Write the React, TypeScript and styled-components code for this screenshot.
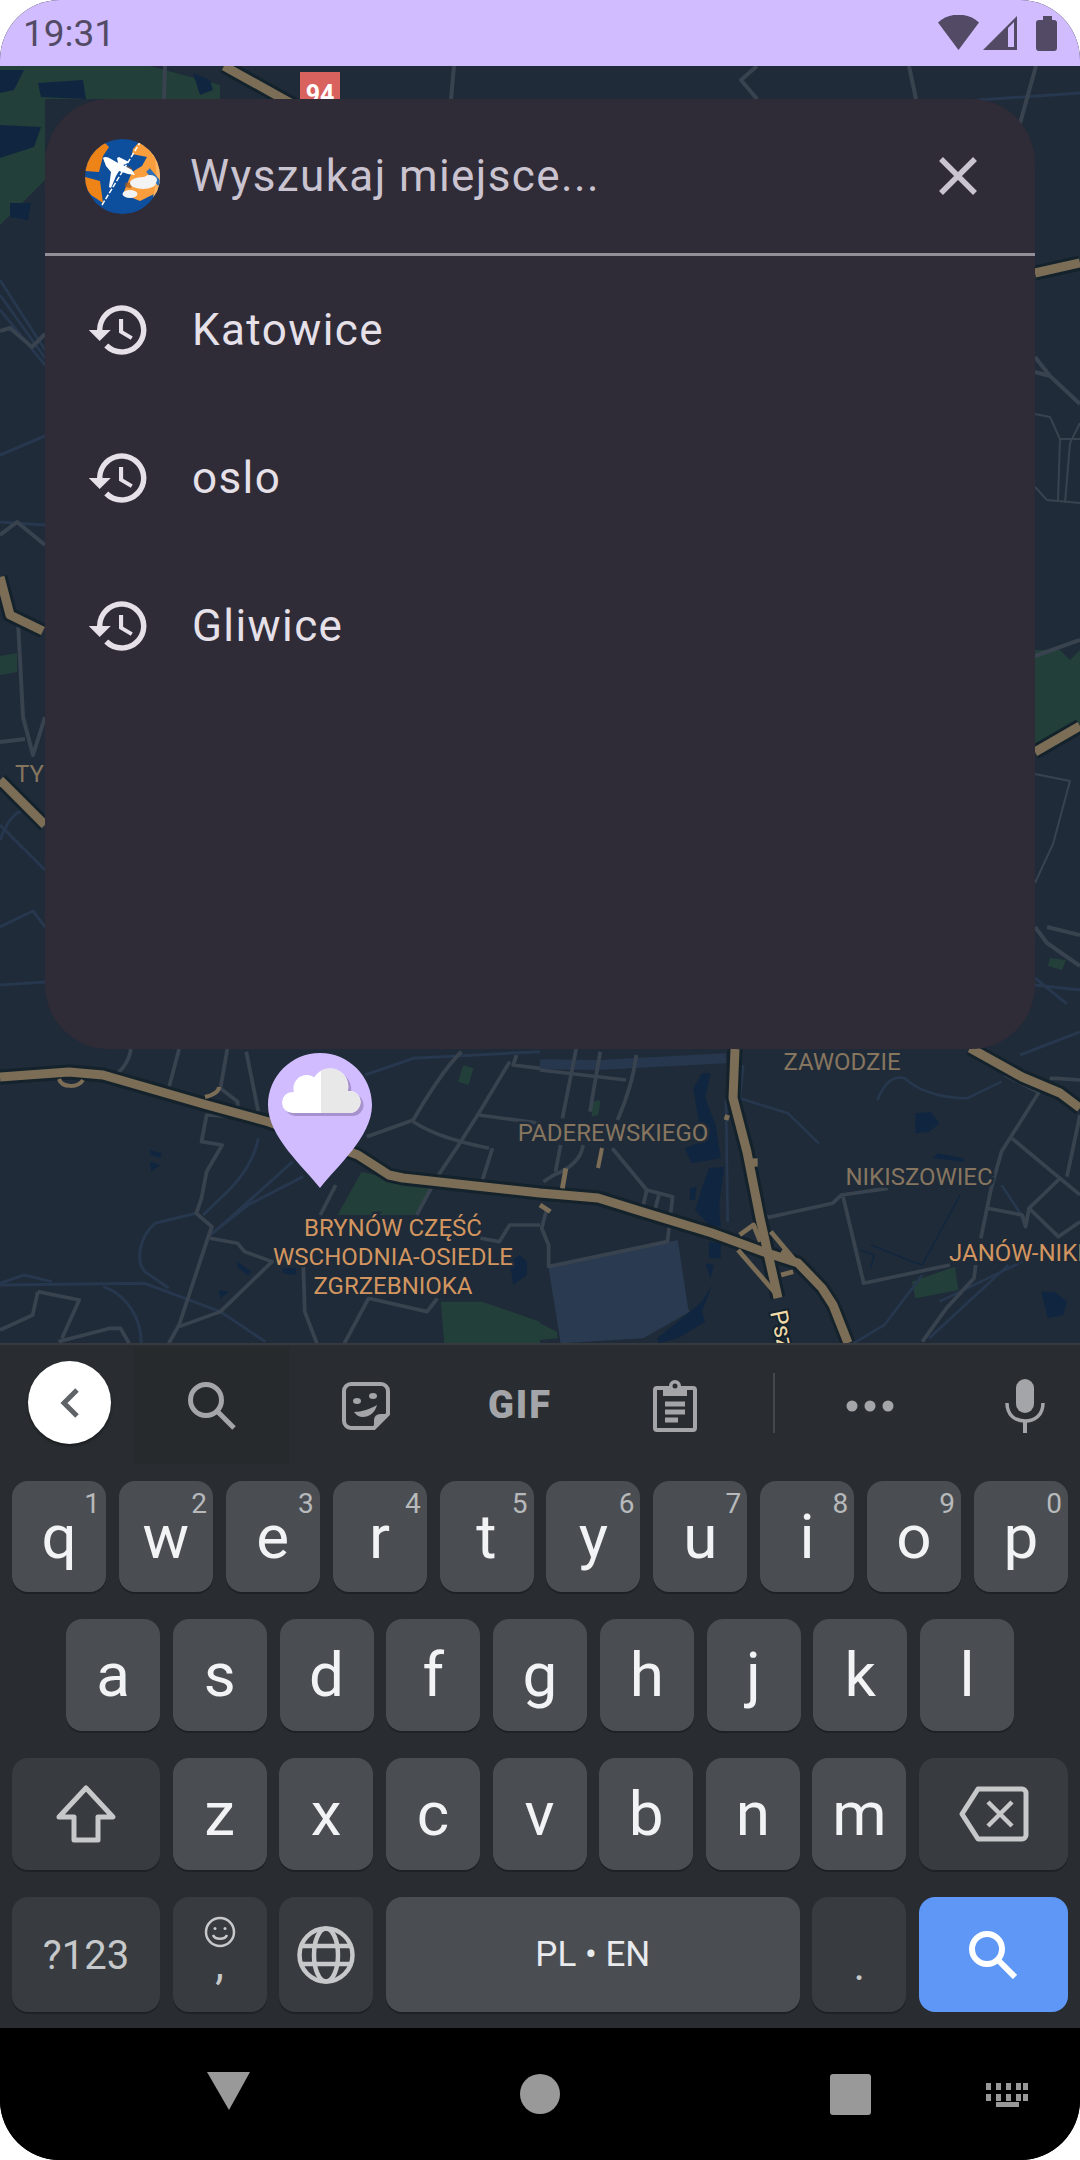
import { createGlobalStyle, styled } from "styled-components";

const GlobalStyle = createGlobalStyle`
  html, body {
    margin: 0;
    padding: 0;
    background: #fff;
    font-family: Roboto, "Noto Sans", sans-serif;
  }
`;

const Screen = styled.div`
  width: 1080px;
  height: 2160px;
  border-radius: 60px;
  overflow: hidden;
  display: flex;
  flex-direction: column;
  background: #000;
`;

const StatusBar = styled.div`
  height: 66px;
  flex: none;
  background: #d0bcff;
  display: flex;
  align-items: center;
  justify-content: space-between;
  padding: 0 22px 0 23px;
  box-sizing: border-box;
`;

const Clock = styled.span`
  font-size: 37px;
  color: #534a66;
`;

const StatusIcons = styled.svg`
  width: 120px;
  height: 36px;
  fill: #534a66;
`;

const MapArea = styled.div`
  position: relative;
  height: 1277px;
  flex: none;
  overflow: hidden;
  background: #1f2b38;
`;

const MapDrawing = styled.svg`
  display: block;
  width: 1080px;
  height: 1277px;
`;

const MapLabel = styled.text<{ $tone?: "bright" | "dim" }>`
  font-family: Roboto, sans-serif;
  font-size: 24px;
  fill: ${(p) => (p.$tone === "bright" ? "#d2955f" : "#86755f")};
  stroke: #1f2b38;
  stroke-width: 5px;
  paint-order: stroke;
`;

const RoadSign = styled.div`
  position: absolute;
  left: 300px;
  top: 6px;
  width: 40px;
  height: 40px;
  background: #d9625f;
  color: #fff;
  font-size: 25px;
  font-weight: 700;
  text-align: center;
  line-height: 46px;
`;

const Pin = styled.svg`
  position: absolute;
  left: 268px;
  top: 987px;
  width: 104px;
  height: 135px;
`;

const SearchPanel = styled.div`
  position: absolute;
  left: 45px;
  top: 33px;
  width: 990px;
  height: 950px;
  border-radius: 64px;
  background: #2f2b37;
  display: flex;
  flex-direction: column;
`;

const SearchRow = styled.div`
  height: 154px;
  flex: none;
  box-sizing: border-box;
  padding: 0 58px 0 40px;
  display: flex;
  align-items: center;
  gap: 30px;
`;

const Placeholder = styled.span`
  flex: 1;
  font-size: 44px;
  letter-spacing: 1.4px;
  color: #cac4d0;
`;

const Divider = styled.div`
  height: 3px;
  flex: none;
  background: #938f99;
`;

const HistoryRow = styled.div`
  height: 148px;
  display: flex;
  align-items: center;
  gap: 40px;
  padding-left: 41px;
  font-size: 44px;
  letter-spacing: 1.4px;
  color: #e6e0e9;
`;

const HistoryIcon = styled.svg`
  width: 66px;
  height: 66px;
  fill: #e6e0e9;
  flex: none;
`;

const Keyboard = styled.div`
  height: 685px;
  flex: none;
  box-sizing: border-box;
  border-top: 2px solid #36393d;
  background: #292d31;
  display: flex;
  flex-direction: column;
`;

const Toolbar = styled.div`
  height: 136px;
  flex: none;
  display: flex;
  align-items: flex-start;
  padding-left: 28px;
`;

const BackButton = styled.div`
  width: 83px;
  height: 83px;
  flex: none;
  margin: 16px 23px 0 0;
  border-radius: 50%;
  background: #fff;
  box-shadow: 0 2px 3px rgba(0, 0, 0, 0.4);
  display: flex;
  align-items: center;
  justify-content: center;
`;

const ToolSlot = styled.div<{ $width: number; $active?: boolean }>`
  width: ${(p) => p.$width}px;
  height: 117px;
  margin-top: 2px;
  flex: none;
  display: flex;
  align-items: center;
  justify-content: center;
  background: ${(p) => (p.$active ? "#272a2d" : "transparent")};
`;

const ToolSeparator = styled.div`
  width: 2px;
  height: 60px;
  margin: 28px 20px 0 20px;
  flex: none;
  background: #44484c;
`;

const ToolIcon = styled.svg`
  flex: none;
`;

const GifMark = styled.span`
  font-size: 38px;
  font-weight: 900;
  letter-spacing: 2px;
  margin-bottom: 2px;
  color: #a3a5a8;
`;

const KeyRows = styled.div`
  display: flex;
  flex-direction: column;
  gap: 27px;
`;

const KeyRow = styled.div<{ $inset?: number; $height: number }>`
  height: ${(p) => p.$height}px;
  display: flex;
  justify-content: space-between;
  padding: 0 ${(p) => 12 + (p.$inset ?? 0)}px;
`;

const Key = styled.div<{ $width?: number; $tone?: "letter" | "func" | "accent" }>`
  position: relative;
  width: ${(p) => p.$width ?? 94}px;
  height: 100%;
  flex: none;
  border-radius: 16px;
  background: ${(p) =>
    p.$tone === "func" ? "#383c40" : p.$tone === "accent" ? "#5e97f6" : "#4a4e52"};
  box-shadow: ${(p) => (p.$tone === "accent" ? "none" : "0 2px 0 #1f2225")};
  display: flex;
  flex-direction: column;
  align-items: center;
  justify-content: center;
  color: #f1f3f4;
  font-size: 62px;
  line-height: 1;
`;

const Hint = styled.span`
  position: absolute;
  top: 9px;
  right: 6px;
  font-size: 28px;
  color: #b7b9bb;
`;

const SpaceLabel = styled.span`
  font-size: 35px;
  color: #e8eaed;
`;

const SymbolsLabel = styled.span`
  font-size: 40px;
  margin-top: 3px;
  color: #c6c8ca;
`;

const PunctLabel = styled.span<{ $top: number; $bottom?: number }>`
  font-size: 44px;
  color: #c6c8ca;
  margin-top: ${(p) => p.$top}px;
  margin-bottom: ${(p) => p.$bottom ?? 0}px;
`;

const NavBar = styled.div`
  flex: 1;
  background: #000;
`;

const NavIcons = styled.svg`
  display: block;
  width: 1080px;
  height: 132px;
  fill: #999;
`;

const minorRoads = [
  "M520 12L490 130", "M660 12L640 130L690 170L690 215L600 210L585 290L645 300L600 380L585 460L570 505L615 545L600 590L520 840L490 895",
  "M380 12C375 50 350 80 335 90", "M715 20L750 200", "M1340 20C1290 70 1230 170 1200 225L1065 275",
  "M1200 230C1260 270 1330 290 1420 310", "M1480 50L1390 205L1335 295L1270 395L1210 510", "M1390 210L1568 235",
  "M1430 310L1390 440", "M1500 30L1490 60L1568 70", "M610 580L690 595L710 620L790 650L640 800L520 845",
  "M110 740L230 765L180 880M110 740L95 810L0 855", "M170 890L320 850L350 850L375 895",
  "M880 640L885 800L920 895", "M1000 895L1070 760L1240 800L1270 760", "M1395 580L1450 590L1480 540L1568 540",
  "M975 420L930 510",
];

const blueRoads = [
  "M0 720L420 715L640 800L770 890", "M0 715L70 690L150 710", "M570 505L450 535C410 570 390 640 420 680L490 730",
  "M300 725C370 750 410 820 410 895", "M750 280C740 340 700 400 660 440L590 510", "M610 570L720 480L880 395",
  "M640 545L850 350", "M1060 90L1200 40L1568 20",
];

const minorRoadsEast = [
  "M105 12L65 220", "M175 20L145 200", "M280 30C270 110 240 190 225 225", "M0 75L250 105",
  "M60 300L45 380", "M125 300C120 340 90 370 40 390L10 410",
  "M210 310L310 435L385 455L370 590L25 665L25 600L5 550L20 490", "M310 435L300 480M345 450L335 490",
  "M650 510L665 517L850 475L875 450L1010 430", "M880 455L940 715L1190 660",
  "M1450 140L1340 320L1310 430L1280 580", "M1370 280L1510 400L1568 450", "M1510 400L1420 490L1505 575L1568 530",
  "M1530 395L1568 210", "M1300 490L1400 510L1410 545L1420 490", "M1265 660L1260 700L1180 790L1110 890",
  "M1480 100L1500 100L1568 105", "M1445 140L1350 90",
];

const blueRoadsEast = [
  "M980 165C1000 110 1030 90 1060 100C1090 130 1150 160 1240 160L1340 110", "M590 60L580 160L720 205L810 295",
  "M1160 770L1400 650", "M910 895L1000 840L1110 690", "M1130 880L1360 660",
  "M540 160L545 530", "M1340 420L1410 530",
];

const tanRamps = [
  "M580 570L620 540L640 590", "M670 560L735 640L700 620", "M575 615L680 740", "M700 690L735 680",
  "M75 370L65 430", "M0 480L30 500", "M545 210L540 225", "M625 340L625 365",
];

const motorways = [
  "M0 1077L69 1072L103 1075L207 1105L269 1122L358 1155L389 1175L403 1178L540 1193L598 1198L643 1212L712 1233L764 1252L798 1263L822 1288L833 1305L848 1343",
  "M735 1049L733 1098L747 1152L760 1218L778 1298",
  "M970 1048L1022 1077L1060 1093L1080 1108",
  "M224 66L303 110",
  "M1035 273L1080 263",
  "M1035 752L1080 726",
  "M0 577L10 615L43 631",
  "M0 780L45 825",
];

function MapPicture() {
  return (
    <MapDrawing viewBox="0 66 1080 1277">
      {/* west of the centre, coordinates read off a 3x crop */}
      <g transform="translate(0 1045) scale(.3444 .3333)" fill="none" strokeLinejoin="round">
        <g fill="#233f3a">
          <path d="M1050 380L1130 400L1250 430L1210 510L980 510Z" />
          <path d="M1280 770L1400 770L1568 830L1568 895L1290 895Z" />
          <path d="M1345 60L1375 70L1360 120L1330 110Z" />
        </g>
        <g fill="#102640">
          <path d="M435 315L470 325L465 338L438 330Z" />
          <path d="M435 350L465 360L440 380Z" />
          <path d="M690 650L730 680L720 692L688 665Z" />
          <path d="M635 735L665 740L640 760Z" />
          <path d="M1480 650L1510 630L1530 650L1530 690L1490 720Z" />
          <path d="M820 670L860 670L860 690L820 685Z" />
        </g>
        <g stroke="#26374e" strokeWidth="9">
          {blueRoads.map((d) => <path key={d} d={d} />)}
        </g>
        <g stroke="#38434f" strokeWidth="11">
          {minorRoads.map((d) => <path key={d} d={d} />)}
        </g>
      </g>
      {/* east of the centre */}
      <g transform="translate(540 1045) scale(.3444 .3333)" fill="none" strokeLinejoin="round">
        <path fill="#2a3a50" d="M25 670L400 585L430 790L435 800L300 880L60 895Z" />
        <path stroke="#26374e" strokeWidth="30" d="M0 58L170 60L540 40" />
        <g fill="#233f3a">
          <path d="M1080 710L1205 665L1215 735L1090 760Z" />
          <path d="M0 835L50 860L50 880L0 885Z" />
          <path d="M150 170L175 165L170 210L150 215Z" />
        </g>
        <g fill="#102640">
          <path d="M470 85L495 85L480 160L510 240L525 340L440 355L420 310L470 290L445 130Z" />
          <path d="M490 370L535 365L520 480L525 545L490 540L450 495L470 430Z" />
          <path d="M490 590L525 595L525 640L490 640Z" />
          <path d="M480 655L505 660L495 700Z" />
          <path d="M470 770L500 720L470 800L480 830L400 880L345 895L340 880Z" />
          <path d="M1090 205L1135 200L1160 235L1130 260L1090 265Z" />
          <path d="M1140 340L1155 325L1230 340L1230 350Z" />
          <path d="M1455 740L1495 740L1530 770L1520 810L1475 820Z" />
          <path d="M435 430L455 425L450 465L435 465Z" />
        </g>
        <g stroke="#26374e" strokeWidth="8">
          {blueRoadsEast.map((d) => <path key={d} d={d} />)}
        </g>
        <path stroke="#102640" strokeWidth="4" d="M960 600L1080 650L1110 660L1220 450M930 615L970 630L960 670" />
        <g stroke="#38434f" strokeWidth="11">
          {minorRoadsEast.map((d) => <path key={d} d={d} />)}
        </g>
      </g>

      {/* north-west woods and ponds */}
      <path fill="#233f3a" d="M0 66L150 66L220 85L220 99L45 99L45 180L0 225Z" />
      <g fill="#102640">
        <path d="M0 70L24 70L14 90L0 93Z" />
        <path d="M38 83L83 80L86 99L41 97Z" />
        <path d="M0 125L41 127L34 147L0 158Z" />
        <path d="M193 73L210 80L213 90L200 95Z" />
        <path d="M10 203L31 203L28 220L10 217Z" />
      </g>
      <g fill="#233f3a">
        <path d="M0 656L17 653L17 672L0 675Z" />
        <path d="M1035 650L1060 650L1070 660L1080 650L1080 725L1035 750Z" />
        <path d="M1050 958L1066 960L1062 970L1048 966Z" />
      </g>

      <g fill="none" stroke="#26374e" strokeWidth="3" strokeLinejoin="round">
        <path d="M978 100L1080 93" />
        <path d="M0 280L45 350M0 295L45 358M0 310L45 365" />
        <path d="M0 455L45 436M0 522L45 525" />
        <path d="M0 825L45 870M0 840C15 800 30 810 45 815" />
        <path d="M0 927L33 911L45 927M0 985L45 982" />
        <path d="M1035 978L1067 1004M1020 1055L1080 1032M1035 985L1080 990" />
      </g>
      <g fill="none" stroke="#38434f" strokeWidth="4" strokeLinejoin="round">
        <path d="M165 66L164 99M454 66L451 99M757 66L741 80L757 99M909 66L916 99M1036 66L1019 127" />
        <path d="M0 331L10 328L32 347L45 334" />
        <path d="M0 535L17 522L45 545" />
        <path d="M18 621L23 717L33 755L45 717M0 742L25 739" />
        <path d="M1035 372L1050 376L1080 404M1035 357L1050 376" />
        <path d="M1035 656L1080 640" />
        <path d="M1035 927L1047 943L1080 966M1047 927L1080 935" />
      </g>
      <g fill="none" stroke="#38434f" strokeWidth="2" strokeLinejoin="round">
        <path d="M1035 414L1050 417L1060 439L1080 439M1060 439L1058 500M1035 487L1047 500L1080 503M1070 443L1065 503M1080 423L1070 443" />
        <path d="M1035 774L1070 781L1053 844L1035 883" />
      </g>

      {/* motorways: dark casing, then tan */}
      <g fill="none" strokeLinejoin="round" strokeLinecap="butt">
        <g stroke="#14222c" strokeWidth="15">
          {motorways.map((d) => <path key={d} d={d} />)}
        </g>
        <g stroke="#7b6d56" strokeWidth="9">
          {motorways.map((d) => <path key={d} d={d} />)}
        </g>
        <g transform="translate(540 1045) scale(.3444 .3333)" stroke="#7b6d56" strokeWidth="14">
          {tanRamps.map((d) => <path key={d} d={d} />)}
        </g>
        <g stroke="#7b6d56" strokeWidth="4">
          <path d="M59 1079C62 1088 78 1088 83 1080" />
          <path d="M205 1097C213 1095 219 1092 219 1087" />
          <path d="M598 1168L602 1148" />
        </g>
      </g>

      <MapLabel $tone="dim" x="15" y="782">TY</MapLabel>
      <MapLabel $tone="dim" x="842" y="1070" textAnchor="middle">ZAWODZIE</MapLabel>
      <MapLabel $tone="dim" x="613" y="1141" textAnchor="middle">PADEREWSKIEGO</MapLabel>
      <MapLabel $tone="dim" x="919" y="1185" textAnchor="middle">NIKISZOWIEC</MapLabel>
      <MapLabel $tone="bright" x="393" y="1236" textAnchor="middle">BRYNÓW CZĘŚĆ</MapLabel>
      <MapLabel $tone="bright" x="393" y="1265" textAnchor="middle">WSCHODNIA-OSIEDLE</MapLabel>
      <MapLabel $tone="bright" x="393" y="1294" textAnchor="middle">ZGRZEBNIOKA</MapLabel>
      <MapLabel $tone="bright" x="949" y="1261">JANÓW-NIKISZOWIEC</MapLabel>
      <text
        x="770"
        y="1312"
        transform="rotate(78 770 1312)"
        fontFamily="Roboto, sans-serif"
        fontSize="24"
        fill="#f0d9a8"
        stroke="#14222c"
        strokeWidth="4"
        paintOrder="stroke"
      >
        Psz
      </text>
    </MapDrawing>
  );
}

function CloudShape({ fill }: { fill: string }) {
  return (
    <g fill={fill}>
      <circle cx="24.5" cy="49.5" r="10.5" />
      <circle cx="38.7" cy="35.3" r="13.3" />
      <circle cx="62" cy="33.7" r="18.3" />
      <circle cx="81.5" cy="49" r="11" />
      <rect x="24.5" y="40" width="57" height="20" />
    </g>
  );
}

function MapPin() {
  return (
    <Pin viewBox="0 0 104 135">
      <defs>
        <clipPath id="cloudRight">
          <rect x="53" y="0" width="51" height="135" />
        </clipPath>
      </defs>
      <path
        fill="#d0bcff"
        d="M52 135C36 114 0 84 0 52C0 23.3 23.3 0 52 0s52 23.3 52 52c0 32-36 62-52 83Z"
      />
      <g transform="translate(3 3)">
        <CloudShape fill="#a792ce" />
      </g>
      <CloudShape fill="#fff" />
      <g clipPath="url(#cloudRight)">
        <CloudShape fill="#e8e8e8" />
      </g>
    </Pin>
  );
}

function AppLogo() {
  return (
    <ToolIcon width="75" height="75" viewBox="0 0 75 75">
      <defs>
        <clipPath id="globe">
          <circle cx="37.5" cy="37.5" r="37.5" />
        </clipPath>
      </defs>
      <g clipPath="url(#globe)">
        <rect width="75" height="75" fill="#0d4e9d" />
        <path fill="#ee8418" d="M0 20L18 2L24 8L18 17L14 33L0 32Z" />
        <path fill="#ee8418" d="M0 38L15 42L18 64L6 56L0 48Z" />
        <path fill="#f99d3d" d="M48 10L55 2L75 18L75 52L55 62L38 55L47 33L57 27L62 18L47 15Z" />
        <path fill="#fbb565" d="M60 5L75 18L75 52L68 58L72 40L70 20Z" />
        <path stroke="#2c6fb8" strokeWidth="5" d="M63 31L75 45" />
        <path stroke="#fff" strokeWidth="1.5" strokeDasharray="5 2" fill="none" d="M17 66L56 2" />
        <path fill="#9c5a1e" opacity="0.7" d="M42 27L47 29L46 34L42 33ZM40 44L48 43L46 49L40 48Z" />
        <ellipse cx="58" cy="44" rx="13" ry="6" fill="#f3f3f3" />
        <ellipse cx="65" cy="41" rx="7" ry="5" fill="#f3f3f3" />
        <ellipse cx="45" cy="55" rx="7.5" ry="4" fill="#f3f3f3" />
        <path
          fill="#fff"
          d="M18 19C20 17 23 18 26 20L33 24L32 19L34 18L44 23L41 25L38 26L47 31L50 36L43 35L34 32L31 37L26 49L24 48L26 33L21 27Z"
        />
      </g>
    </ToolIcon>
  );
}

const historyPath =
  "M13 3a9 9 0 0 0-9 9H1l3.89 3.89.07.14L9 12H6c0-3.87 3.13-7 7-7s7 3.13 7 7-3.13 7-7 7c-1.93 0-3.68-.79-4.94-2.06l-1.42 1.42A8.954 8.954 0 0 0 13 21a9 9 0 0 0 0-18zm-1 5v5l4.28 2.54.72-1.21-3.5-2.08V8H12z";

const places = ["Katowice", "oslo", "Gliwice"];

const topLetters = [
  ["q", "1"], ["w", "2"], ["e", "3"], ["r", "4"], ["t", "5"],
  ["y", "6"], ["u", "7"], ["i", "8"], ["o", "9"], ["p", "0"],
];
const middleLetters = ["a", "s", "d", "f", "g", "h", "j", "k", "l"];
const lowerLetters = ["z", "x", "c", "v", "b", "n", "m"];

function App() {
  return (
    <>
      <GlobalStyle />
      <Screen>
        <StatusBar>
          <Clock>19:31</Clock>
          <StatusIcons viewBox="0 0 120 36">
            {/* wifi wedge, signal, battery */}
            <path d="M0 7.5C11-3 30-3 41 7.5L20.5 35Z" />
            <path fillRule="evenodd" d="M45 35L79 1V35ZM70 13L70 32L76 32L76 7Z" />
            <path d="M105 1h9v4h2a3 3 0 0 1 3 3v25a3 3 0 0 1-3 3h-15a3 3 0 0 1-3-3V8a3 3 0 0 1 3-3h4Z" />
          </StatusIcons>
        </StatusBar>

        <MapArea>
          <MapPicture />
          <RoadSign>94</RoadSign>
          <MapPin />
          <SearchPanel>
            <SearchRow>
              <AppLogo />
              <Placeholder>Wyszukaj miejsce...</Placeholder>
              <ToolIcon width="38" height="38" viewBox="0 0 38 38" stroke="#cac4d0" strokeWidth="5.5">
                <path d="M2 2L36 36M36 2L2 36" />
              </ToolIcon>
            </SearchRow>
            <Divider />
            {places.map((place) => (
              <HistoryRow key={place}>
                <HistoryIcon viewBox="0 0 24 24">
                  <path d={historyPath} />
                </HistoryIcon>
                {place}
              </HistoryRow>
            ))}
          </SearchPanel>
        </MapArea>

        <Keyboard>
          <Toolbar>
            <BackButton>
              <ToolIcon width="24" height="32" viewBox="0 0 24 32" fill="none" stroke="#5f6368" strokeWidth="5">
                <path d="M19 3L6 16L19 29" />
              </ToolIcon>
            </BackButton>
            <ToolSlot $width={155} $active>
              <ToolIcon width="48" height="48" viewBox="0 0 48 48" fill="none" stroke="#a3a5a8" strokeWidth="5">
                <circle cx="18" cy="18" r="15.5" />
                <path d="M29 29L46 46" />
              </ToolIcon>
            </ToolSlot>
            <ToolSlot $width={154}>
              <ToolIcon width="48" height="48" viewBox="0 0 48 48">
                <path
                  fill="none"
                  stroke="#a3a5a8"
                  strokeWidth="4"
                  strokeLinejoin="round"
                  d="M9 2H39A7 7 0 0 1 46 9V32L32 46H9A7 7 0 0 1 2 39V9A7 7 0 0 1 9 2Z"
                />
                <path fill="#a3a5a8" d="M46 32L32 46V38A6 6 0 0 1 38 32Z" />
                <path fill="#a3a5a8" d="M12 30C20 30 28 27 35 23C33 31 27 35 21 35C17 35 14 33 12 30Z" />
                <ellipse cx="15" cy="19" rx="4" ry="3" fill="#a3a5a8" />
                <ellipse cx="31" cy="14" rx="4" ry="3" fill="#a3a5a8" />
              </ToolIcon>
            </ToolSlot>
            <ToolSlot $width={154}>
              <GifMark>GIF</GifMark>
            </ToolSlot>
            <ToolSlot $width={156}>
              <ToolIcon width="44" height="52" viewBox="0 0 44 52">
                <path
                  fill="none"
                  stroke="#a3a5a8"
                  strokeWidth="4"
                  strokeLinejoin="round"
                  d="M10 8H4A2 2 0 0 0 2 10V48A2 2 0 0 0 4 50H40A2 2 0 0 0 42 48V10A2 2 0 0 0 40 8H34"
                />
                <path fill="#a3a5a8" fillRule="evenodd" d="M10 6H16A6 6 0 0 1 28 6H34V16H10ZM22 3.5A2.5 2.5 0 1 0 22 8.5A2.5 2.5 0 1 0 22 3.5Z" />
                <path stroke="#a3a5a8" strokeWidth="5" d="M12 24H32M12 32H32M12 40H25" />
              </ToolIcon>
            </ToolSlot>
            <ToolSeparator />
            <ToolSlot $width={150}>
              <ToolIcon width="48" height="12" viewBox="0 0 48 12" fill="#a3a5a8">
                <circle cx="6" cy="6" r="5.5" />
                <circle cx="24" cy="6" r="5.5" />
                <circle cx="42" cy="6" r="5.5" />
              </ToolIcon>
            </ToolSlot>
            <ToolSlot $width={160}>
              <ToolIcon width="40" height="54" viewBox="0 0 40 54" fill="#a3a5a8">
                <rect x="11" y="0" width="18" height="34" rx="9" />
                <path fill="none" stroke="#a3a5a8" strokeWidth="3.5" d="M2 24C2 36 10 42 20 42C30 42 38 36 38 24" />
                <rect x="18" y="41" width="4" height="13" />
              </ToolIcon>
            </ToolSlot>
          </Toolbar>

          <KeyRows>
            <KeyRow $height={111}>
              {topLetters.map(([letter, hint]) => (
                <Key key={letter}>
                  <Hint>{hint}</Hint>
                  {letter}
                </Key>
              ))}
            </KeyRow>
            <KeyRow $height={112} $inset={54}>
              {middleLetters.map((letter) => (
                <Key key={letter}>{letter}</Key>
              ))}
            </KeyRow>
            <KeyRow $height={112}>
              <Key $width={148} $tone="func">
                <ToolIcon width="62" height="60" viewBox="0 0 62 60" fill="none" stroke="#c6c8ca" strokeWidth="5" strokeLinejoin="round">
                  <path d="M31 4L58 33H43V56H19V33H4Z" />
                </ToolIcon>
              </Key>
              {lowerLetters.map((letter) => (
                <Key key={letter}>{letter}</Key>
              ))}
              <Key $width={149} $tone="func">
                <ToolIcon width="70" height="56" viewBox="0 0 70 56" fill="none" stroke="#c6c8ca" strokeWidth="5" strokeLinejoin="round">
                  <path d="M19 3H63A4 4 0 0 1 67 7V49A4 4 0 0 1 63 53H19L3 28Z" />
                  <path strokeWidth="4.5" d="M29 16L53 40M53 16L29 40" />
                </ToolIcon>
              </Key>
            </KeyRow>
            <KeyRow $height={115}>
              <Key $width={148} $tone="func">
                <SymbolsLabel>?123</SymbolsLabel>
              </Key>
              <Key $tone="func">
                <ToolIcon width="32" height="32" viewBox="0 0 32 32" fill="none" stroke="#c6c8ca" strokeWidth="2.5">
                  <circle cx="16" cy="16" r="14" />
                  <circle cx="11" cy="12.5" r="1.5" fill="#c6c8ca" stroke="none" />
                  <circle cx="21" cy="12.5" r="1.5" fill="#c6c8ca" stroke="none" />
                  <path d="M9 19C11 24 21 24 23 19" />
                </ToolIcon>
                <PunctLabel $top={-6} $bottom={7}>,</PunctLabel>
              </Key>
              <Key $tone="func">
                <ToolIcon width="58" height="58" viewBox="0 0 58 58" fill="none" stroke="#c6c8ca" strokeWidth="4.5">
                  <circle cx="29" cy="29" r="26.5" />
                  <ellipse cx="29" cy="29" rx="12" ry="26.5" />
                  <path d="M5 20H53M5 38H53" />
                </ToolIcon>
              </Key>
              <Key $width={414}>
                <SpaceLabel>PL • EN</SpaceLabel>
              </Key>
              <Key $tone="func">
                <PunctLabel $top={20}>.</PunctLabel>
              </Key>
              <Key $width={149} $tone="accent">
                <ToolIcon width="48" height="48" viewBox="0 0 48 48" fill="none" stroke="#fff" strokeWidth="6">
                  <circle cx="18" cy="18" r="15" />
                  <path d="M29 29L46 46" />
                </ToolIcon>
              </Key>
            </KeyRow>
          </KeyRows>
        </Keyboard>

        <NavBar>
          <NavIcons viewBox="0 2028 1080 132">
            <path d="M207 2072H250L229 2110Z" />
            <circle cx="540" cy="2094" r="20" />
            <rect x="830" y="2074" width="41" height="41" rx="3" />
            <path d="M986 2083h5v7h-5zM996 2083h5v7h-5zM1006 2083h5v7h-5zM1016 2083h5v7h-5zM1023 2083h5v7h-5zM986 2094h5v7h-5zM996 2094h5v7h-5zM1006 2094h5v7h-5zM1016 2094h5v7h-5zM1023 2094h5v7h-5zM996 2102h23v5h-23z" />
          </NavIcons>
        </NavBar>
      </Screen>
    </>
  );
}

export default App;
